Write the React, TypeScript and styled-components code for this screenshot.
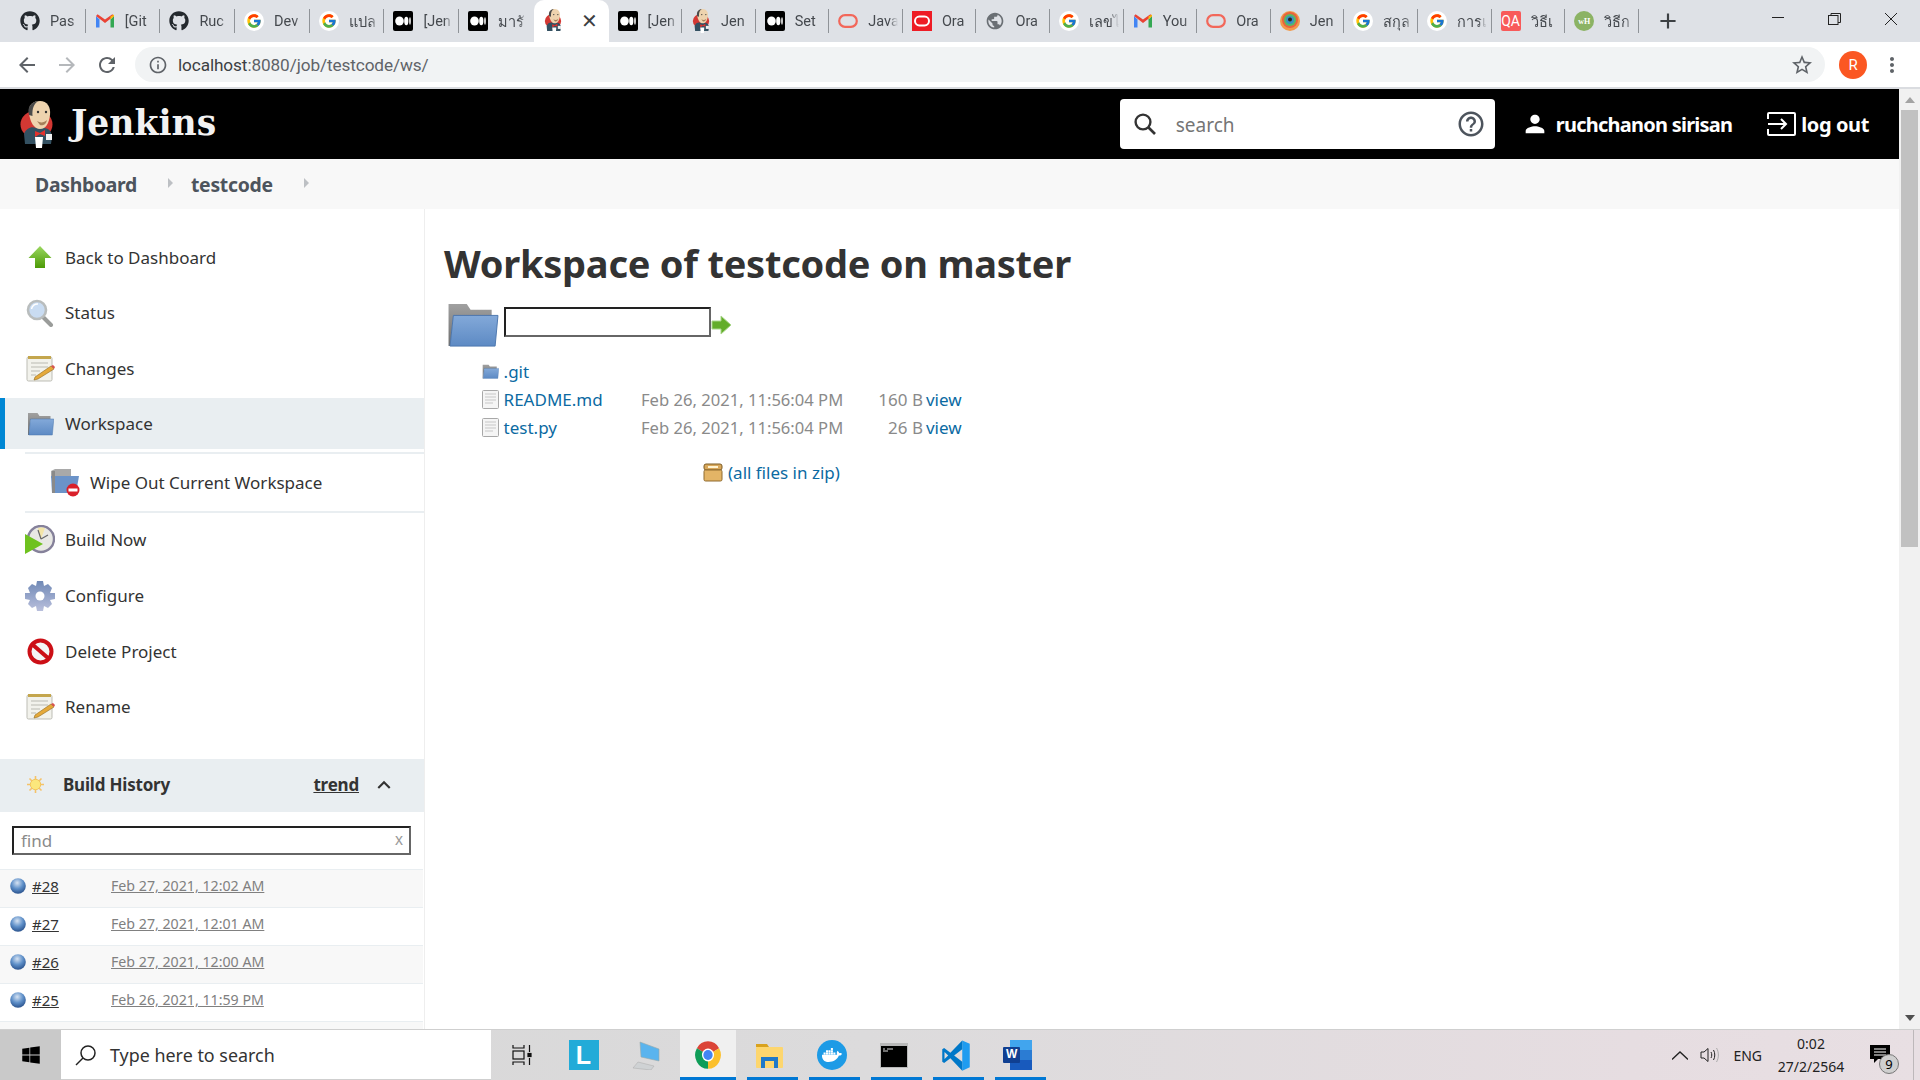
import React from 'react';
import styled, { createGlobalStyle } from 'styled-components';
import { FaGithub, FaDocker, FaWindows } from 'react-icons/fa';
import { FcGoogle } from 'react-icons/fc';
import { MdArrowBack, MdArrowForward, MdRefresh, MdInfoOutline, MdStarBorder, MdMoreVert, MdPerson, MdHelpOutline, MdKeyboardArrowUp, MdAdd, MdPublic } from 'react-icons/md';

const UI = `"Noto Sans", "Open Sans", "DejaVu Sans", sans-serif`;

const Global = createGlobalStyle`
  html, body { margin: 0; padding: 0; height: 100%; overflow: hidden; background: #fff; }
  body { font-family: ${UI}; color: #333; }
  * { box-sizing: border-box; }
`;

const Screen = styled.div`
  width: 1920px; height: 1080px; display: flex; flex-direction: column; overflow: hidden;
`;

/* ---------- browser chrome ---------- */
const TabStrip = styled.div`
  height: 42px; flex: none; background: #dee1e6; display: flex; align-items: stretch; padding-left: 11px;
`;
const Tab = styled.div<{ $wide?: boolean; $active?: boolean; $noSep?: boolean }>`
  position: relative; flex: none; width: ${p => (p.$wide ? '74.7px' : '73.6px')};
  display: flex; align-items: center; padding-left: 9px; gap: 10px;
  background: ${p => (p.$active ? '#fff' : 'transparent')};
  border-radius: ${p => (p.$active ? '10px 10px 0 0' : '0')};
  &::after {
    content: ''; position: absolute; right: 0; top: 9px; height: 24px; width: 1px;
    background: ${p => (p.$noSep ? 'transparent' : '#8f9398')};
  }
`;
const FaviconBox = styled.span`
  flex: none; width: 20px; height: 20px; display: flex; align-items: center; justify-content: center;
`;
const TabLabel = styled.span`
  font: 400 14.5px Roboto, "Noto Sans", "DejaVu Sans", sans-serif; color: #45494e; white-space: nowrap;
  width: 30px; overflow: hidden;
  -webkit-mask-image: linear-gradient(90deg, #000 70%, transparent);
  mask-image: linear-gradient(90deg, #000 70%, transparent);
`;
const TabClose = styled.span`
  font: 400 20px Roboto, sans-serif; color: #3c4043; margin-left: 8px; line-height: 1;
`;
const NewTab = styled.span`
  flex: none; margin-left: 16px; width: 26px; display: flex; align-items: center; color: #3c4043;
`;
const WindowControls = styled.div`
  margin-left: auto; display: flex; align-items: flex-start; padding-top: 13px; padding-right: 23px; gap: 44px;
`;
const Toolbar = styled.div`
  height: 45px; flex: none; background: #fff; display: flex; align-items: center; padding: 5px 0 5px 15px;
`;
const NavIcons = styled.div`
  display: flex; gap: 16px; width: 120px; color: #5f6368; flex: none;
`;
const NavBtn = styled.span<{ $dim?: boolean }>`
  display: flex; color: ${p => (p.$dim ? '#b5b8bb' : '#5f6368')}; width: 24px; height: 24px;
`;
const Omnibox = styled.div`
  width: 1690px; height: 35px; flex: none; border-radius: 18px; background: #f1f3f4; display: flex; align-items: center;
  padding: 0 11px 0 13px; gap: 10px; color: #5f6368;
`;
const Url = styled.span`
  font: 400 17.2px Roboto, sans-serif; color: #3c4043; flex: 1; letter-spacing: -.1px;
  & b { font-weight: 400; color: #5f6368; }
`;
const Avatar = styled.span`
  flex: none; margin-left: 14px; width: 28px; height: 28px; border-radius: 50%; background: #fb5722; color: #fff;
  font: 400 15px Roboto, sans-serif; display: flex; align-items: center; justify-content: center;
`;
const KebabWrap = styled.span`
  display: flex; color: #5f6368; margin-left: 13px;
`;
const ChromeDivider = styled.div`
  height: 2px; flex: none; background: #dadce0;
`;

/* ---------- page ---------- */
const PageRow = styled.div`
  flex: 1; min-height: 0; display: flex;
`;
const Page = styled.div`
  flex: 1; min-width: 0; display: flex; flex-direction: column; overflow: hidden;
`;
const Scrollbar = styled.div`
  flex: none; width: 21px; background: #f1f1f1; display: flex; flex-direction: column; align-items: center;
`;
const ScrollArrow = styled.span<{ $down?: boolean }>`
  width: 0; height: 0; border-left: 5px solid transparent; border-right: 5px solid transparent; margin: 8px 0;
  ${p => (p.$down ? 'border-top: 6px solid #505050;' : 'border-bottom: 6px solid #a3a3a3;')}
`;
const Thumb = styled.div`
  width: 17px; height: 437px; background: #c1c1c1; margin-top: -1px;
`;
const ScrollFill = styled.div`flex: 1;`;
const Header = styled.header`
  height: 70px; flex: none; background: #000; display: flex; align-items: center; padding-left: 20px; color: #fff;
`;
const Brand = styled.span`
  font: 700 34.6px "DejaVu Serif", serif; color: #f2f2f2; margin-left: 18px; margin-top: -3px;
`;
const SearchBox = styled.div`
  margin-left: auto; width: 375px; height: 50px; border-radius: 4px; background: #fff; display: flex; align-items: center;
  padding: 0 9px 0 13px; color: #333;
`;
const SearchText = styled.span`
  flex: 1; margin-left: 19px; font-size: 19px; color: #757575; padding-top: 1px;
`;
const HeaderLink = styled.span<{ $ml: number; $ls: number }>`
  display: flex; align-items: center; margin-left: ${p => p.$ml}px; font-size: 20px; font-weight: 700; color: #fff; letter-spacing: ${p => p.$ls}px;
`;
const HeaderLinkIcon = styled.span<{ $mr: number }>`
  display: flex; margin-right: ${p => p.$mr}px;
`;
const HeaderEnd = styled.div`width: 30px; flex: none;`;
const Breadcrumbs = styled.nav`
  height: 50px; flex: none; background: #f8f8f8; display: flex; align-items: center; padding: 1px 0 0 35px;
  font-size: 19.4px; font-weight: 700; color: #4d545d;
`;
const Crumb = styled.span`letter-spacing: -.3px;`;
const CrumbArrow = styled.span<{ $ml: number; $mr: number }>`
  width: 0; height: 0; border-top: 5px solid transparent; border-bottom: 5px solid transparent; border-left: 5px solid #bdc0c4;
  margin: -3px ${p => p.$mr}px 0 ${p => p.$ml}px;
`;
const Body = styled.div`
  flex: 1; min-height: 0; display: flex;
`;
const Sidebar = styled.aside`
  flex: none; width: 425px; border-right: 1px solid #eeeeee; display: flex; flex-direction: column; overflow: hidden; background: #fff;
`;
const Tasks = styled.div`
  padding-top: 22.5px; display: flex; flex-direction: column; gap: 4.67px;
`;
const TaskItem = styled.div<{ $active?: boolean }>`
  height: 51px; flex: none; display: flex; align-items: center; gap: 9px; padding-left: 19px;
  border-left: 5px solid ${p => (p.$active ? '#0087d4' : 'transparent')};
  background: ${p => (p.$active ? '#e9eef1' : 'transparent')};
  font-size: 17px; color: #333;
`;
const IconBox = styled.span`
  width: 32px; height: 32px; flex: none; display: flex; align-items: center; justify-content: center;
`;
const SubTasks = styled.div`
  margin: -1.67px 0 -3.4px 25px; border-top: 2px solid #e9eef1; border-bottom: 2px solid #e9eef1; height: 60.7px;
  display: flex; align-items: center; gap: 9px; padding-left: 24px; font-size: 17px; color: #333;
`;
const HistoryBar = styled.div`
  margin-top: 27px; height: 53px; flex: none; background: #e9eef1; display: flex; align-items: center; padding: 0 0 2px 27px;
`;
const HistoryTitle = styled.span`
  margin-left: 19px; font-size: 17px; font-weight: 700; color: #333; flex: 1; letter-spacing: -.2px;
`;
const TrendLink = styled.span`
  font-size: 17px; font-weight: 700; color: #333; text-decoration: underline; letter-spacing: -.2px;
`;
const Chevron = styled.span`
  display: flex; margin: 0 27px 0 12px; color: #333;
`;
const FindWrap = styled.div`
  height: 56.2px; flex: none; padding: 13.2px 13px 14px 12px;
`;
const FindInput = styled.div`
  height: 29px; border: 2px solid; border-color: #222 #666 #666 #222; display: flex; align-items: center; justify-content: space-between;
  padding: 0 6px 0 7px; font-size: 17px; color: #8a8a8a;
`;
const FindClear = styled.span`font: 400 16px "Liberation Sans", sans-serif; color: #9a9a9a;`;
const HistoryRow = styled.div<{ $odd?: boolean }>`
  height: 38px; flex: none; width: 423px; border-top: 1px solid #e9eef1; display: flex; align-items: center; padding: 0 0 5px 10px;
  background: ${p => (p.$odd ? '#f8f8f8' : '#fff')}; font-size: 15px;
`;
const BuildNo = styled.span`
  margin-left: 6px; width: 79px; color: #333; text-decoration: underline;
`;
const BuildDate = styled.span`
  color: #808080; text-decoration: underline; font-size: 14.2px;
`;
const Main = styled.main`
  flex: 1; min-width: 0; padding: 29px 0 0 19px; background: #fff;
`;
const Heading = styled.h1`
  margin: 0; font-size: 38px; line-height: 50px; font-weight: 700; color: #333; letter-spacing: -.25px;
`;
const PathRow = styled.div`
  margin: 14px 0 0 2px; height: 45px; display: flex; align-items: center; gap: 5px;
`;
const PathInput = styled.div`
  width: 207px; height: 30px; margin-top: -5px; border: 2px solid; border-color: #222 #666 #666 #222; background: #fff;
`;
const PathGo = styled.span`
  display: flex; margin-left: -5px;
`;
const FileGrid = styled.div`
  margin: 10px 0 0 38px; width: 479px; display: grid; grid-template-columns: 21.6px 138.4px 199px 82px 38px; grid-auto-rows: 28px; align-items: center; font-size: 17px;
`;
const FileIcon = styled.span`display: flex;`;
const FileLink = styled.span`color: #0b6aa2; font-weight: 400;`;
const FileMeta = styled.span`color: #8a8a8a; white-space: nowrap; font-size: 16.6px; margin-left: -1px;`;
const FileSize = styled.span`color: #8a8a8a; text-align: right;`;
const ViewLink = styled.span`color: #0b6aa2; padding-left: 3px;`;
const ZipRow = styled.div`
  margin: 17px 0 0 259px; display: flex; align-items: center; gap: 5px; font-size: 17px; color: #0b6aa2; height: 28px;
`;

/* ---------- taskbar ---------- */
const Taskbar = styled.footer`
  height: 51px; flex: none; display: flex; align-items: stretch;
  background: linear-gradient(90deg, #d6d6d6 0%, #dcdbdc 45%, #e6dde1 85%, #e8dfe3 100%);
  border-top: 1px solid #cfcfcf;
`;
const StartBtn = styled.span`
  flex: none; width: 61px; background: #c9c9c9; display: flex; align-items: center; justify-content: center; color: #000;
`;
const TaskSearch = styled.div`
  flex: none; width: 429.5px; background: #fff; border-bottom: 1px solid #cfcfcf; display: flex; align-items: center; padding-left: 14px;
  gap: 13px; font-size: 17.9px; color: #333;
`;
const TaskCell = styled.span<{ $on?: boolean; $open?: boolean }>`
  position: relative; flex: none; width: 62px; display: flex; align-items: center; justify-content: center;
  &::before {
    content: ''; position: absolute; top: 0; bottom: 0; left: 3px; width: 56px;
    background: ${p => (p.$on ? '#f0f0f0' : 'transparent')};
  }
  &::after {
    content: ''; position: absolute; bottom: 0; height: 3px; left: ${p => (p.$on ? '3px' : '8px')}; width: ${p => (p.$on ? '56px' : '51px')};
    background: ${p => (p.$open ? '#0078d4' : 'transparent')};
  }
  & > * { position: relative; }
`;
const Tray = styled.div`
  margin-left: auto; display: flex; align-items: center; color: #222;
`;
const TrayItem = styled.span<{ $ml: number }>`
  display: flex; margin-left: ${p => p.$ml}px;
`;
const TrayLang = styled.span`
  margin-left: 13px; font-size: 14px; color: #222;
`;
const Clock = styled.div`
  margin-left: 14px; width: 70px; text-align: center; font-size: 14px; line-height: 23px; color: #222;
`;
const Notify = styled.span`
  position: relative; display: flex; margin-left: 24px; margin-right: 23px;
`;
const NotifyBadge = styled.span`
  position: absolute; left: 9px; top: 9px; width: 20px; height: 20px; border-radius: 50%; background: #cfcfcf; border: 1px solid #777;
  font-size: 13px; color: #000; display: flex; align-items: center; justify-content: center;
`;
const TrayEdge = styled.span`
  flex: none; width: 7px; align-self: stretch; border-left: 1px solid #bdb8ba;
`;
const QaBox = styled.span`
  width: 20px; height: 20px; border-radius: 2px; background: #f85a5a; color: #fff; font: 400 14px Roboto, sans-serif; display: flex; align-items: center; justify-content: center;
`;
const WhBadge = styled.span`
  width: 20px; height: 20px; border-radius: 50%; background: #8bb364; color: #fff; font: 700 8px "Liberation Serif", serif; display: flex; align-items: center; justify-content: center;
`;
const GoogleDisc = styled.span`
  width: 20px; height: 20px; border-radius: 50%; background: #fff; display: flex; align-items: center; justify-content: center;
`;

/* ---------- drawings ---------- */
const JenkinsLogo = ({ w = 33, h = 47 }: { w?: number; h?: number }) => (
  <svg width={w} height={h} viewBox="0 0 33 47">
    <ellipse cx="16.5" cy="23.5" rx="16" ry="14" fill="#d33833" />
    <path d="M4 33 C6 27 12 25 16 27 L24 27 C29 27 32 31 32 36 L31 43 L5 43 Z" fill="#335061" />
    <path d="M9 12 C8 3 14 0 20 0 C27 0 31 6 30 14 C29 22 26 28 20 28 C14 28 10 21 9 12 Z" fill="#eed3ae" />
    <path d="M9 14 C7 6 11 1 18 0 C14 3 12 7 12.5 15 Z" fill="#4b4b4b" />
    <path d="M17 20 C20 22 24 22 27 19 C26 24 22 25 20 24 Z" fill="#a57f5a" />
    <circle cx="18" cy="11" r="1.2" fill="#333" /><circle cx="26" cy="11" r="1.2" fill="#333" />
    <path d="M15 30 L20 32 L25 29 L25 35 L20 33 L15 36 Z" fill="#e3312c" />
    <path d="M15 36 H23 L22 47 H16 Z" fill="#fff" />
    <rect x="26" y="33" width="6" height="6" fill="#f1f1f1" />
  </svg>
);
const Medium = () => (
  <svg width="20" height="20" viewBox="0 0 20 20">
    <rect width="20" height="20" rx="2" fill="#000" />
    <ellipse cx="6.500" cy="10" rx="4.300" ry="4.500" fill="#fff" />
    <ellipse cx="13.300" cy="10" rx="2.100" ry="4.200" fill="#fff" />
    <ellipse cx="17" cy="10" rx=".8" ry="3.800" fill="#fff" />
  </svg>
);
const Gmail = () => (
  <svg width="20" height="20" viewBox="0 0 20 20">
    <path d="M1 5v11.5h3.5V8.5z" fill="#4285f4" />
    <path d="M15.5 8.5v8H19V5z" fill="#34a853" />
    <path d="M1 5l9 7 9-7-1.600-1.800L10 8.500 2.600 3.200z" fill="#ea4335" />
    <path d="M15.500 5.500L19 3.600V5l-3.500 3.500z" fill="#fbbc04" />
  </svg>
);
const OracleRing = ({ c = '#f2675a' }: { c?: string }) => (
  <svg width="20" height="20" viewBox="0 0 20 20">
    <rect x="1.200" y="4.200" width="17.600" height="11.600" rx="5.800" fill="none" stroke={c} strokeWidth="2.200" />
  </svg>
);
const OracleRed = () => (
  <svg width="20" height="20" viewBox="0 0 20 20">
    <rect width="20" height="20" fill="#ee1c25" />
    <rect x="3" y="5.600" width="14" height="8.800" rx="4.400" fill="none" stroke="#fff" strokeWidth="2" />
  </svg>
);
const Rainbow = () => (
  <svg width="20" height="20" viewBox="0 0 20 20">
    <circle cx="10" cy="10" r="10" fill="#f2994a" />
    <circle cx="10" cy="9" r="8" fill="#e8643c" />
    <circle cx="10" cy="9" r="6" fill="#54b96a" />
    <circle cx="10" cy="9" r="4" fill="#3b8fc4" />
    <circle cx="10" cy="8.500" r="2" fill="#222" />
  </svg>
);

const UpArrow = () => (
  <svg width="24" height="24" viewBox="0 0 24 24">
    <defs><linearGradient id="ga" x1="0" y1="0" x2="0" y2="1"><stop offset="0" stopColor="#9bd860" /><stop offset="1" stopColor="#4c9a06" /></linearGradient></defs>
    <path d="M12 1 L23.500 13 H17 V23 H7 V13 H.5 Z" fill="url(#ga)" />
  </svg>
);
const Magnifier = () => (
  <svg width="28" height="28" viewBox="0 0 28 28">
    <path d="M17 18 L25 26" stroke="#9a9c9a" strokeWidth="4" strokeLinecap="round" />
    <circle cx="11" cy="11" r="9" fill="#c9dcf2" stroke="#b9bdbd" strokeWidth="2.600" />
    <path d="M5.500 10 A6 6 0 0 1 12 5" fill="none" stroke="#fff" strokeWidth="1.500" />
  </svg>
);
const Notepad = () => (
  <svg width="29" height="27" viewBox="0 0 29 27">
    <rect x="1" y="2" width="25" height="24" rx="1.500" fill="#f2f2ec" stroke="#bdbdb5" />
    <rect x="2" y="1" width="23" height="3" fill="#c4a64d" />
    <path d="M5 8h17M5 12h17M5 16h9M5 20h5" stroke="#b9b9b2" strokeWidth="1.200" />
    <path d="M9 22 L25 11 L28 14 L12 24 L8 25 Z" fill="#e5a93a" stroke="#8f6a1f" strokeWidth=".6" />
    <path d="M25 11 L28 14 L29 12 L27 10 Z" fill="#d9534f" />
  </svg>
);
const Folder = ({ w = 27, h = 24, id = 'a' }: { w?: number; h?: number; id?: string }) => (
  <svg width={w} height={h} viewBox="0 0 27 24">
    <defs>
      <linearGradient id={`gf${id}`} x1="0" y1="0" x2="0" y2="1"><stop offset="0" stopColor="#83a9d9" /><stop offset="1" stopColor="#5d8ac4" /></linearGradient>
      <linearGradient id={`gk${id}`} x1="0" y1="0" x2="0" y2="1"><stop offset="0" stopColor="#a0a0a0" /><stop offset="1" stopColor="#6f6f6f" /></linearGradient>
    </defs>
    <path d="M1 1 H10.500 L12.500 4 H23.500 V8 H3.500 L2 23 H1 Z" fill={`url(#gk${id})`} />
    <path d="M3.500 7 H26.800 L25.300 23 H1.800 Z" fill={`url(#gf${id})`} stroke="#4b76ad" strokeWidth=".5" />
  </svg>
);
const WipeIcon = () => (
  <svg width="30" height="29" viewBox="0 0 30 29">
    <path d="M1 3 L5 1 H21 V10 H1 Z" fill="#a9a9a9" />
    <path d="M1 8 H29 L26 25 H2 Z" fill="#6b93c9" />
    <path d="M2 3 V25 H5 V3 Z" fill="#8a8a8a" />
    <circle cx="23" cy="22" r="6.500" fill="#d9202a" />
    <rect x="18.500" y="20.500" width="9" height="3" fill="#fff" />
  </svg>
);
const ClockPlay = () => (
  <svg width="30" height="30" viewBox="0 0 30 30">
    <circle cx="16" cy="14" r="13" fill="#e8e8e4" stroke="#85819a" strokeWidth="2.400" />
    <path d="M16 14 L13 3 A12 12 0 0 1 20 3 Z" fill="#f3e5a8" />
    <path d="M16 14 L23 10 M16 14 L13 5" stroke="#666" strokeWidth="1.200" />
    <path d="M0 9 L18 19 L0 29 Z" fill="#6fc21f" />
  </svg>
);
const Gear = () => (
  <svg width="30" height="30" viewBox="0 0 30 30">
    <defs><linearGradient id="gg" x1="0" y1="0" x2="0" y2="1"><stop offset="0" stopColor="#7089b6" /><stop offset="1" stopColor="#b9bfdc" /></linearGradient></defs>
    <path d="M12 0h6l1 5 4-2 4 4-2 5 5 0v6l-5 1 2 4-4 4-4-2-1 5h-6l-1-5-4 2-4-4 2-4-5-1v-6l5 0-2-5 4-4 4 2z" fill="url(#gg)" />
    <circle cx="15" cy="15" r="4.500" fill="#fff" />
  </svg>
);
const NoEntry = () => (
  <svg width="27" height="27" viewBox="0 0 27 27">
    <circle cx="13.500" cy="13.500" r="11" fill="#f4f4f4" stroke="#cc0f16" strokeWidth="4" />
    <path d="M6 7 L21 20" stroke="#cc0f16" strokeWidth="4" />
  </svg>
);
const Sun = () => (
  <svg width="17" height="17" viewBox="0 0 17 17">
    <g stroke="#f5c26a" strokeWidth="1.600"><path d="M8.500 0v17M0 8.500h17M2.500 2.500l12 12M14.500 2.500l-12 12" /></g>
    <circle cx="8.500" cy="8.500" r="5.200" fill="#fbe77c" stroke="#f3c45d" />
  </svg>
);
const Ball = () => (
  <svg width="16" height="16" viewBox="0 0 16 16">
    <defs><radialGradient id="gb" cx=".45" cy=".3" r=".75"><stop offset="0" stopColor="#d5e2f2" /><stop offset=".5" stopColor="#5f90c9" /><stop offset="1" stopColor="#234a85" /></radialGradient></defs>
    <circle cx="8" cy="8" r="7.800" fill="url(#gb)" />
  </svg>
);
const GoArrow = () => (
  <svg width="21" height="20" viewBox="0 0 21 20">
    <path d="M1 6 H10 V1 L20 10 L10 19 V14 H1 Z" fill="#63ad2a" stroke="#a9d68a" strokeWidth="1" />
  </svg>
);
const Doc = () => (
  <svg width="17" height="19" viewBox="0 0 17 19">
    <rect x=".5" y=".5" width="16" height="18" rx="1" fill="#f5f5f5" stroke="#a8a8a8" />
    <path d="M3 4h11M3 7h11M3 10h11M3 13h8" stroke="#c8c8c8" strokeWidth="1.200" />
  </svg>
);
const ZipBox = () => (
  <svg width="20" height="19" viewBox="0 0 20 19">
    <rect x="1" y="1" width="18" height="6" rx="2" fill="#d9a85b" stroke="#7d5c25" />
    <rect x="1" y="7" width="18" height="11" rx="1.500" fill="#e3b466" stroke="#8f6b2f" />
    <rect x="5" y="3" width="10" height="2" fill="#fff3d0" />
  </svg>
);
const SearchGlass = ({ s = 24, c = '#333' }: { s?: number; c?: string }) => (
  <svg width={s} height={s} viewBox="0 0 24 24"><circle cx="10" cy="10" r="7.400" fill="none" stroke={c} strokeWidth="2.400" /><path d="M15.500 15.500 L22 22" stroke={c} strokeWidth="2.600" /></svg>
);
const LogoutIcon = () => (
  <svg width="29" height="24" viewBox="0 0 29 24" fill="none" stroke="#fff" strokeWidth="2">
    <path d="M1 7 V2 a1 1 0 0 1 1-1 H27 a1 1 0 0 1 1 1 V22 a1 1 0 0 1-1 1 H2 a1 1 0 0 1-1-1 V17" />
    <path d="M1 12 H19 M14 7 L19 12 L14 17" />
  </svg>
);
const Chrome = () => (
  <svg width="28" height="30" viewBox="0 0 24 24" preserveAspectRatio="none">
    <path d="M12 12 L2.470 6.500 A11 11 0 0 1 21.530 6.500 Z" fill="#db4437" />
    <path d="M12 12 L21.530 6.500 A11 11 0 0 1 12 23 Z" fill="#fbc02d" />
    <path d="M12 12 L12 23 A11 11 0 0 1 2.470 6.500 Z" fill="#0f9d58" />
    <circle cx="12" cy="12" r="5.200" fill="#fff" />
    <circle cx="12" cy="12" r="4" fill="#4285f4" />
  </svg>
);
const Files = () => (
  <svg width="27" height="25" viewBox="0 0 27 25">
    <path d="M0 1 H11 L13 4 H0 Z" fill="#d9a21e" />
    <rect x="0" y="4" width="27" height="21" rx="1" fill="#fdd66e" />
    <path d="M5 25 V14 H22 V25 H18 V18 H9 V25 Z" fill="#1f79c9" />
  </svg>
);
const Cmd = () => (
  <svg width="28" height="25" viewBox="0 0 28 25">
    <rect width="28" height="25" fill="#b9b9b9" />
    <rect x="1" y="3" width="26" height="21" fill="#000" />
    <path d="M3 6h2M3 8h5M7 6h6" stroke="#ddd" strokeWidth="1" />
  </svg>
);
const VsCode = () => (
  <svg width="30" height="33" viewBox="0 0 24 24" preserveAspectRatio="none">
    <path d="M17 1 L23 3.500 V20.500 L17 23 L17 1 Z" fill="#1f9cf0" />
    <path d="M17 1 L7.500 10 L2.500 6.500 L1 7.500 V16.500 L2.500 17.500 L7.500 14 L17 23 V16.500 L10.500 12 L17 7.500 Z M2.800 9.500 L5.800 12 L2.800 14.500 Z" fill="#0078c8" fillRule="evenodd" />
  </svg>
);
const Word = () => (
  <svg width="29" height="32" viewBox="0 0 29 32">
    <rect x="7" y="1" width="22" height="10" fill="#41a5ee" />
    <rect x="7" y="11" width="22" height="10" fill="#2b7cd3" />
    <rect x="7" y="21" width="22" height="10" fill="#185abd" />
    <rect x="0" y="8" width="17" height="16" rx="1" fill="#103f91" />
  </svg>
);
const Laptop = () => (
  <svg width="28" height="29" viewBox="0 0 28 29">
    <path d="M8 1 L27 8 V20 L9 16 Z" fill="#5ab4ee" stroke="#9aa" strokeWidth=".6" />
    <path d="M1 27 L6 21 L22 25 L19 29 Z" fill="#cfd2d4" stroke="#aaa" strokeWidth=".5" />
  </svg>
);
const TaskView = () => (
  <svg width="20" height="20" viewBox="0 0 20 20" fill="none" stroke="#111" strokeWidth="1.200">
    <path d="M1 0v3h11V0M1 20v-3h11v3" /><rect x="1" y="6" width="11" height="8" /><path d="M17.500 0v7M17.500 13v7" /><rect x="16" y="8.500" width="3" height="3" fill="#111" />
  </svg>
);
const LApp = styled.span`
  width: 30px; height: 30px; background: #22abd8; color: #fff; font: 700 25px "Liberation Sans", sans-serif; display: flex; align-items: center; justify-content: center;
`;
const DockerDisc = styled.span`
  width: 30px; height: 30px; border-radius: 50%; background: #1d9be6; color: #fff; display: flex; align-items: center; justify-content: center;
`;
const WordLetter = styled.span`
  position: absolute; left: 3px; top: 8px; font: 700 12px "Liberation Sans", sans-serif; color: #fff;
`;
const WordBox = styled.span`position: relative; display: flex;`;

type Fav = 'gh' | 'gm' | 'g' | 'md' | 'j' | 'or' | 'orr' | 'gl' | 'rb' | 'qa' | 'wh';
const tabs: { f: Fav; t: string }[] = [
  { f: 'gh', t: 'Pas' }, { f: 'gm', t: '[Git' }, { f: 'gh', t: 'Ruc' }, { f: 'g', t: 'Dev' }, { f: 'g', t: 'แปล' },
  { f: 'md', t: '[Jen' }, { f: 'md', t: 'มารั' }, { f: 'j', t: '' }, { f: 'md', t: '[Jen' }, { f: 'j', t: 'Jen' },
  { f: 'md', t: 'Set' }, { f: 'or', t: 'Java' }, { f: 'orr', t: 'Ora' }, { f: 'gl', t: 'Ora' }, { f: 'g', t: 'เลขไ' },
  { f: 'gm', t: 'You' }, { f: 'or', t: 'Ora' }, { f: 'rb', t: 'Jen' }, { f: 'g', t: 'สกุล' }, { f: 'g', t: 'การเ' },
  { f: 'qa', t: 'วิธีเ' }, { f: 'wh', t: 'วิธีก' },
];
const Favicon = ({ f }: { f: Fav }) => {
  switch (f) {
    case 'gh': return <FaGithub size={20} color="#24292e" />;
    case 'gm': return <Gmail />;
    case 'g': return <GoogleDisc><FcGoogle size={16} /></GoogleDisc>;
    case 'md': return <Medium />;
    case 'j': return <JenkinsLogo w={20} h={24} />;
    case 'or': return <OracleRing />;
    case 'orr': return <OracleRed />;
    case 'gl': return <MdPublic size={22} color="#6a6f74" />;
    case 'rb': return <Rainbow />;
    case 'qa': return <QaBox>QA</QaBox>;
    default: return <WhBadge>wH</WhBadge>;
  }
};

const taskItems1 = [
  { icon: <UpArrow />, label: 'Back to Dashboard' },
  { icon: <Magnifier />, label: 'Status' },
  { icon: <Notepad />, label: 'Changes' },
  { icon: <Folder id="s" />, label: 'Workspace', active: true },
];
const taskItems2 = [
  { icon: <ClockPlay />, label: 'Build Now' },
  { icon: <Gear />, label: 'Configure' },
  { icon: <NoEntry />, label: 'Delete Project' },
  { icon: <Notepad />, label: 'Rename' },
];
const builds = [
  { n: '#28', d: 'Feb 27, 2021, 12:02 AM' },
  { n: '#27', d: 'Feb 27, 2021, 12:01 AM' },
  { n: '#26', d: 'Feb 27, 2021, 12:00 AM' },
  { n: '#25', d: 'Feb 26, 2021, 11:59 PM' },
  { n: '', d: '' },
];

export default function App() {
  return (
    <Screen>
      <Global />
      <TabStrip>
        {tabs.map((t, i) => (
          <Tab key={i} $wide={i < 8} $active={i === 7} $noSep={i === 6 || i === 7}>
            <FaviconBox><Favicon f={t.f} /></FaviconBox>
            {i === 7 ? <TabClose>✕</TabClose> : <TabLabel>{t.t}</TabLabel>}
          </Tab>
        ))}
        <NewTab><MdAdd size={26} /></NewTab>
        <WindowControls>
          <svg width="12" height="12" viewBox="0 0 12 12"><path d="M0 4.500h12" stroke="#222" /></svg>
          <svg width="13" height="12" viewBox="0 0 13 12" fill="none" stroke="#222"><rect x=".5" y="2.500" width="9.500" height="9" /><path d="M3 2.500V.5h9.500v9h-2.500" /></svg>
          <svg width="12" height="12" viewBox="0 0 12 12"><path d="M0 0l12 12M12 0L0 12" stroke="#222" /></svg>
        </WindowControls>
      </TabStrip>
      <Toolbar>
        <NavIcons>
          <NavBtn><MdArrowBack size={24} /></NavBtn>
          <NavBtn $dim><MdArrowForward size={24} /></NavBtn>
          <NavBtn><MdRefresh size={24} /></NavBtn>
        </NavIcons>
        <Omnibox>
          <MdInfoOutline size={20} />
          <Url>localhost<b>:8080/job/testcode/ws/</b></Url>
          <MdStarBorder size={24} />
        </Omnibox>
        <Avatar>R</Avatar>
        <KebabWrap><MdMoreVert size={24} /></KebabWrap>
      </Toolbar>
      <ChromeDivider />
      <PageRow>
        <Page>
          <Header>
            <JenkinsLogo />
            <Brand>Jenkins</Brand>
            <SearchBox>
              <SearchGlass />
              <SearchText>search</SearchText>
              <MdHelpOutline size={30} color="#4d545d" />
            </SearchBox>
            <HeaderLink $ml={26} $ls={-0.76}><HeaderLinkIcon $mr={7}><MdPerson size={28} /></HeaderLinkIcon>ruchchanon sirisan</HeaderLink>
            <HeaderLink $ml={35} $ls={-0.4}><HeaderLinkIcon $mr={5}><LogoutIcon /></HeaderLinkIcon>log out</HeaderLink>
            <HeaderEnd />
          </Header>
          <Breadcrumbs>
            <Crumb>Dashboard</Crumb>
            <CrumbArrow $ml={31} $mr={18} />
            <Crumb>testcode</Crumb>
            <CrumbArrow $ml={31} $mr={0} />
          </Breadcrumbs>
          <Body>
            <Sidebar>
              <Tasks>
                {taskItems1.map(t => (
                  <TaskItem key={t.label} $active={t.active}><IconBox>{t.icon}</IconBox>{t.label}</TaskItem>
                ))}
                <SubTasks><IconBox><WipeIcon /></IconBox>Wipe Out Current Workspace</SubTasks>
                {taskItems2.map(t => (
                  <TaskItem key={t.label}><IconBox>{t.icon}</IconBox>{t.label}</TaskItem>
                ))}
              </Tasks>
              <HistoryBar>
                <Sun />
                <HistoryTitle>Build History</HistoryTitle>
                <TrendLink>trend</TrendLink>
                <Chevron><MdKeyboardArrowUp size={26} /></Chevron>
              </HistoryBar>
              <FindWrap>
                <FindInput>find<FindClear>x</FindClear></FindInput>
              </FindWrap>
              {builds.map((b, i) => (
                <HistoryRow key={i} $odd={i % 2 === 0}>
                  {b.n && <Ball />}
                  <BuildNo>{b.n}</BuildNo>
                  <BuildDate>{b.d}</BuildDate>
                </HistoryRow>
              ))}
            </Sidebar>
            <Main>
              <Heading>Workspace of testcode on master</Heading>
              <PathRow>
                <Folder w={53} h={46} id="b" />
                <PathInput />
                <PathGo><GoArrow /></PathGo>
              </PathRow>
              <FileGrid>
                <FileIcon><Folder w={17} h={15} id="c" /></FileIcon>
                <FileLink>.git</FileLink><span /><span /><span />
                <FileIcon><Doc /></FileIcon>
                <FileLink>README.md</FileLink>
                <FileMeta>Feb 26, 2021, 11:56:04 PM</FileMeta>
                <FileSize>160 B</FileSize>
                <ViewLink>view</ViewLink>
                <FileIcon><Doc /></FileIcon>
                <FileLink>test.py</FileLink>
                <FileMeta>Feb 26, 2021, 11:56:04 PM</FileMeta>
                <FileSize>26 B</FileSize>
                <ViewLink>view</ViewLink>
              </FileGrid>
              <ZipRow><ZipBox />(all files in zip)</ZipRow>
            </Main>
          </Body>
        </Page>
        <Scrollbar>
          <ScrollArrow />
          <Thumb />
          <ScrollFill />
          <ScrollArrow $down />
        </Scrollbar>
      </PageRow>
      <Taskbar>
        <StartBtn><FaWindows size={20} /></StartBtn>
        <TaskSearch>
          <svg width="22" height="22" viewBox="0 0 22 22" fill="none" stroke="#222" strokeWidth="1.500"><circle cx="13" cy="9" r="7" /><path d="M8 14 L1 21" /></svg>
          Type here to search
        </TaskSearch>
        <TaskCell><TaskView /></TaskCell>
        <TaskCell><LApp>L</LApp></TaskCell>
        <TaskCell><Laptop /></TaskCell>
        <TaskCell $on $open><Chrome /></TaskCell>
        <TaskCell $open><Files /></TaskCell>
        <TaskCell $open><DockerDisc><FaDocker size={20} /></DockerDisc></TaskCell>
        <TaskCell $open><Cmd /></TaskCell>
        <TaskCell $open><VsCode /></TaskCell>
        <TaskCell $open><WordBox><Word /><WordLetter>W</WordLetter></WordBox></TaskCell>
        <Tray>
          <TrayItem $ml={0}><svg width="16" height="9" viewBox="0 0 16 9" fill="none" stroke="#222" strokeWidth="1.300"><path d="M0 8.500 L8 1 L16 8.500" /></svg></TrayItem>
          <TrayItem $ml={12}><svg width="20" height="16" viewBox="0 0 20 16" fill="none" stroke="#222" strokeWidth="1"><path d="M1 5h3l4-3.500v13L4 11H1zM11 5c1 2 1 4 0 6M13.500 3c1.700 3 1.700 7 0 10" /><path d="M16.500 1c2.500 4 2.500 10 0 14" stroke="#aaa" /></svg></TrayItem>
          <TrayLang>ENG</TrayLang>
          <Clock>0:02<br />27/2/2564</Clock>
          <Notify>
            <svg width="20" height="20" viewBox="0 0 20 20"><path d="M0 0h20v14H8l-4 4v-4H0z" fill="#000" /><path d="M4 4h12M4 7h12M4 10h12" stroke="#fff" /></svg>
            <NotifyBadge>9</NotifyBadge>
          </Notify>
          <TrayEdge />
        </Tray>
      </Taskbar>
    </Screen>
  );
}
